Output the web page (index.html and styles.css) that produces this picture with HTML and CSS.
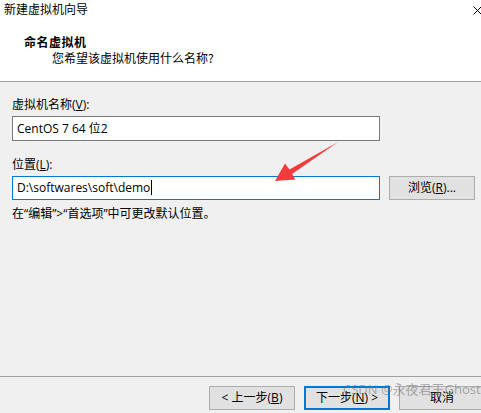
FILE: index.html
```html
<!DOCTYPE html>
<html lang="zh-CN">
<head>
  <meta charset="UTF-8">
  <meta name="viewport" content="width=device-width, initial-scale=1.0">
  <title>新建虚拟机向导</title>
  <link rel="stylesheet" href="styles.css">
</head>
<body>
  <div class="wizard">
    <!-- 顶部白色区域 -->
    <div class="head">
      <div class="titlebar">
        <span>新建虚拟机向导</span>
        <svg class="close" width="9" height="9" viewBox="0 0 9 9">
          <path d="M0.5 0.5 L8.5 8.5 M8.5 0.5 L0.5 8.5" stroke="#000" stroke-width="1" fill="none"/>
        </svg>
      </div>
      <div class="title">命名虚拟机</div>
      <div class="subtitle">您希望该虚拟机使用什么名称?</div>
    </div>

    <!-- 表单 -->
    <div class="content">
      <div class="label">虚拟机名称(<u>V</u>):</div>
      <div class="field name">CentOS 7 64 位2</div>

      <div class="label loc">位置(<u>L</u>):</div>
      <div class="row">
        <div class="field active">D:\softwares\soft\demo<span class="caret"></span></div>
        <button class="btn browse">浏览(<u>R</u>)...</button>
      </div>
      <div class="note">在“编辑”&gt;“首选项”中可更改默认位置。</div>

      <svg class="arrow" width="481" height="413" viewBox="0 0 481 413">
        <polygon points="275,181 285,163.5 289.5,169.5 338,142 292,174 295.5,179.5" fill="#f23b3b"/>
      </svg>
    </div>

    <!-- 底部按钮 -->
    <div class="foot">
      <button class="btn">&lt; 上一步(<u>B</u>)</button>
      <button class="btn default">下一步(<u>N</u>) &gt;</button>
      <button class="btn">取消</button>
      <span class="mark">CSDN @永夜君王Ghost</span>
    </div>
  </div>
</body>
</html>
```

FILE: styles.css
```css
* {
  margin: 0;
  padding: 0;
  box-sizing: border-box;
}
body {
  width: 481px;
  height: 413px;
  overflow: hidden;
  background: #f0f0f0;
  font: 12px/16px "Segoe UI", "Open Sans", "Noto Sans CJK SC", sans-serif;
  color: #000;
}
.wizard {
  position: relative;
  height: 413px;
  display: flex;
  flex-direction: column;
}
/* 顶部 */
.head {
  height: 82px;
  background: #fff;
  border-bottom: 1px solid #a0a0a0;
}
.titlebar {
  display: flex;
  justify-content: space-between;
  padding: 1px 0 0 4px;
  height: 22px;
  font-family: "Noto Sans CJK SC", sans-serif;
}
.titlebar .close {
  margin-top: 5px;
  margin-right: -1px;
}
.title {
  margin-top: 12px;
  padding-left: 24px;
  font-weight: bold;
  letter-spacing: 0.5px;
  font-family: "Noto Sans CJK SC", sans-serif;
}
.subtitle {
  padding-left: 52px;
  font-family: "Noto Sans CJK SC", sans-serif;
}
/* 表单 */
.content {
  flex: 1;
  padding: 15px 0 0 12px;
}
.label {
  margin-bottom: 3px;
}
.label.loc {
  margin-top: 16px;
  margin-bottom: 3px;
}
.field {
  width: 368px;
  height: 25px;
  padding: 0 4px;
  border: 1px solid #7a7a7a;
  background: #fff;
  line-height: 23px;
  white-space: nowrap;
}
.field.active {
  height: 24px;
  line-height: 22px;
  border-color: #0078d7;
}
.caret {
  display: inline-block;
  width: 1px;
  height: 15px;
  margin-left: 1px;
  background: #000;
  vertical-align: -3px;
}
.row {
  display: flex;
  gap: 9px;
}
.btn {
  width: 86px;
  height: 24px;
  border: 1px solid #adadad;
  background: #e1e1e1;
  font: inherit;
  color: #000;
}
.note {
  margin-top: 6px;
}
.arrow {
  position: absolute;
  left: 0;
  top: 0;
  pointer-events: none;
}
/* 底部 */
.foot {
  position: relative;
  height: 37px;
  border-top: 1px solid #a0a0a0;
  display: flex;
  justify-content: flex-end;
  gap: 9px;
  padding-top: 9px;
  margin-right: -4px;
}
.foot .btn {
  height: 24px;
}
.foot .default {
  border: 2px solid #0078d7;
}
.mark {
  position: absolute;
  left: 343px;
  top: 4px;
  font-size: 13px;
  color: rgba(110, 110, 110, 0.55);
  pointer-events: none;
}
```
